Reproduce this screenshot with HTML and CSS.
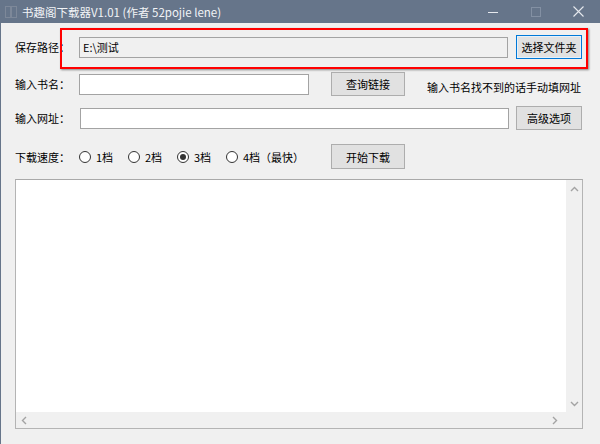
FILE: index.html
```html
<!DOCTYPE html>
<html lang="zh-CN">
<head>
  <meta charset="UTF-8">
  <title>书趣阁下载器V1.01</title>
  <link rel="stylesheet" href="styles.css">
</head>
<body>
  <div class="window">
    <div class="titlebar">
      <svg class="app-icon" width="13" height="12" viewBox="0 0 13 12">
        <rect x="0.5" y="0.5" width="5" height="11" fill="none" stroke="#7d8899"/>
        <rect x="6.5" y="0.5" width="5" height="11" fill="none" stroke="#7d8899"/>
      </svg>
      <span class="title">书趣阁下载器V1.01 (作者 52pojie lene)</span>
      <div class="controls">
        <span class="ctl"><svg width="10" height="10" viewBox="0 0 10 10"><path d="M0 5.5h10" stroke="#e6e9ee" stroke-width="1"/></svg></span>
        <span class="ctl"><svg width="10" height="10" viewBox="0 0 10 10"><rect x="0.5" y="0.5" width="9" height="9" fill="none" stroke="#8390a3"/></svg></span>
        <span class="ctl"><svg width="11" height="11" viewBox="0 0 11 11"><path d="M0.5 0.5l10 10M10.5 0.5l-10 10" stroke="#e6e9ee" stroke-width="1.1"/></svg></span>
      </div>
    </div>

    <div class="content">
      <div class="row row-path">
        <span class="field-label">保存路径：</span>
        <input class="text-box wide readonly" type="text" value="E:\测试" readonly>
        <button class="btn side focused">选择文件夹</button>
      </div>

      <div class="row row-name">
        <span class="field-label">输入书名：</span>
        <input class="text-box short" type="text">
        <button class="btn mid">查询链接</button>
        <span class="hint">输入书名找不到的话手动填网址</span>
      </div>

      <div class="row row-url">
        <span class="field-label">输入网址：</span>
        <input class="text-box wide" type="text">
        <button class="btn side">高级选项</button>
      </div>

      <div class="row row-speed">
        <span class="field-label">下载速度：</span>
        <div class="radios">
          <label class="radio"><span class="dot"></span>1档</label>
          <label class="radio"><span class="dot"></span>2档</label>
          <label class="radio"><span class="dot checked"></span>3档</label>
          <label class="radio"><span class="dot"></span>4档（最快）</label>
        </div>
        <button class="btn mid tall">开始下载</button>
      </div>

      <div class="log">
        <div class="log-area"></div>
        <div class="vscroll">
          <svg width="9" height="6" viewBox="0 0 9 6"><path d="M1 5l3.5-3.5L8 5" fill="none" stroke="#a3a3a3" stroke-width="1.4"/></svg>
          <svg width="9" height="6" viewBox="0 0 9 6"><path d="M1 1l3.5 3.5L8 1" fill="none" stroke="#a3a3a3" stroke-width="1.4"/></svg>
        </div>
        <div class="hscroll">
          <svg width="6" height="9" viewBox="0 0 6 9"><path d="M5 1L1.5 4.5 5 8" fill="none" stroke="#a3a3a3" stroke-width="1.4"/></svg>
          <svg width="6" height="9" viewBox="0 0 6 9"><path d="M1 1l3.5 3.5L1 8" fill="none" stroke="#a3a3a3" stroke-width="1.4"/></svg>
        </div>
        <div class="corner"></div>
      </div>
    </div>

    <div class="highlight"></div>
  </div>
</body>
</html>
```

FILE: styles.css
```css
* {
  margin: 0;
  padding: 0;
  box-sizing: border-box;
  font-family: "Noto Sans CJK SC", "Noto Sans", sans-serif;
}

body {
  width: 600px;
  height: 444px;
  overflow: hidden;
  background: #f0f0f0;
  font-size: 11px;
  color: #000;
}

.window {
  position: relative;
  width: 600px;
  height: 444px;
  background: #f0f0f0;
  border-left: 1px solid #66758a;
  display: flex;
  flex-direction: column;
}

/* title bar */
.titlebar {
  height: 23px;
  margin-left: -1px;
  background: #66758a;
  display: flex;
  align-items: center;
  color: #f2f4f7;
  font-size: 11.5px;
}

.app-icon {
  margin-left: 5px;
  margin-right: 4px;
}

.controls {
  margin-left: auto;
  display: flex;
  height: 100%;
}

.ctl {
  width: 43px;
  height: 100%;
  display: flex;
  align-items: center;
  justify-content: center;
}

/* form */
.content {
  flex: 1;
  padding: 12px 0 0 14px;
  display: flex;
  flex-direction: column;
}

.row {
  display: flex;
  align-items: center;
  height: 24px;
}

.row-name {
  margin-top: 13px;
}

.row-url {
  margin-top: 10px;
}

.row-speed {
  margin-top: 14px;
  height: 25px;
}

.field-label {
  width: 64px;
  white-space: nowrap;
}

.text-box {
  height: 21px;
  border: 1px solid #a3a3a3;
  background: #fff;
  outline: none;
  font-size: 11px;
  padding: 0 3px;
  color: #000;
}

.text-box.readonly {
  background: #f0f0f0;
}

.text-box.wide {
  width: 429px;
  margin-right: 8px;
}

.row-url .text-box.wide {
  margin-left: 1px;
  margin-right: 7px;
}

.text-box.short {
  width: 230px;
  margin-right: 22px;
}

.btn {
  height: 24px;
  background: #e1e1e1;
  border: 1px solid #adadad;
  font-size: 11px;
  color: #000;
}

.btn.side {
  width: 66px;
}

.btn.mid {
  width: 74px;
}

.btn.tall {
  height: 25px;
}

.btn.focused {
  border: 1px solid #0078d7;
  box-shadow: inset 0 0 0 1px #e5f1fb;
}

.hint {
  margin-left: 22px;
  margin-top: 5px;
  white-space: nowrap;
}

/* radios */
.radios {
  width: 252px;
  display: flex;
  align-items: center;
}

.radio {
  width: 49px;
  display: flex;
  align-items: center;
  white-space: nowrap;
}

.radio:last-child {
  width: auto;
}

.dot {
  width: 12px;
  height: 12px;
  border: 1px solid #333;
  border-radius: 50%;
  background: #fff;
  margin-right: 5px;
  display: flex;
  align-items: center;
  justify-content: center;
}

.dot.checked::after {
  content: "";
  width: 6px;
  height: 6px;
  border-radius: 50%;
  background: #333;
}

/* log box */
.log {
  margin-top: 10px;
  width: 568px;
  height: 250px;
  border: 1px solid #b4b4b4;
  border-top-color: #a9a9a9;
  display: grid;
  grid-template-columns: 1fr 16px;
  grid-template-rows: 1fr 16px;
  background: #fff;
}

.log-area {
  background: #fff;
}

.vscroll,
.hscroll,
.corner {
  background: #f0f0f0;
}

.vscroll {
  display: flex;
  flex-direction: column;
  justify-content: space-between;
  align-items: center;
  padding: 6px 0 5px;
}

.hscroll {
  display: flex;
  justify-content: space-between;
  align-items: center;
  padding: 0 8px 0 5px;
}

/* annotation frame drawn over the path row */
.highlight {
  position: absolute;
  left: 59px;
  top: 28px;
  width: 528px;
  height: 41px;
  border: 2px solid #ff0000;
  box-shadow: 1px 1px 2px rgba(0, 0, 0, 0.45);
  pointer-events: none;
}
```
